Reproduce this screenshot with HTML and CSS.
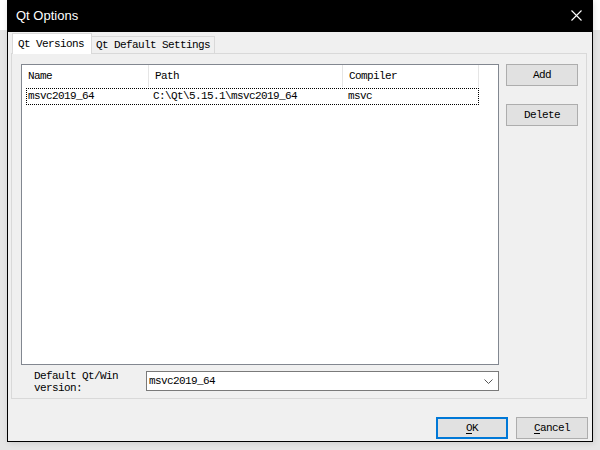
FILE: index.html
```html
<!DOCTYPE html>
<html>
<head>
<meta charset="utf-8">
<link rel="stylesheet" href="styles.css">
</head>
<body>
<div class="desk">
  <div class="behind"></div>
  <div class="window">
    <div class="titlebar">
      <span class="title">Qt Options</span>
      <svg class="close" width="11" height="11" viewBox="0 0 11 11"><path d="M0.5 0.5 L10.5 10.5 M10.5 0.5 L0.5 10.5" stroke="#fff" stroke-width="1.1" fill="none"/></svg>
    </div>
    <div class="client">
      <div class="tabs">
        <div class="tab active">Qt Versions</div>
        <div class="tab">Qt Default Settings</div>
      </div>
      <div class="panel">
        <div class="main-row">
          <div class="list">
            <div class="list-header">
              <div class="col c1">Name</div>
              <div class="col c2">Path</div>
              <div class="col c3">Compiler</div>
              <div class="col c4"></div>
            </div>
            <div class="list-row">
              <div class="cell c1">msvc2019_64</div>
              <div class="cell c2">C:\Qt\5.15.1\msvc2019_64</div>
              <div class="cell c3">msvc</div>
            </div>
          </div>
          <div class="side">
            <button class="btn">Add</button>
            <button class="btn">Delete</button>
          </div>
        </div>
        <div class="default-row">
          <div class="label">Default Qt/Win<br>version:</div>
          <div class="combo">
            <span>msvc2019_64</span>
            <svg class="chev" width="9" height="5" viewBox="0 0 9 5"><path d="M0.5 0.5 L4.5 4.5 L8.5 0.5" stroke="#555" stroke-width="1" fill="none"/></svg>
          </div>
        </div>
      </div>
      <div class="footer">
        <button class="btn default"><u>O</u>K</button>
        <button class="btn"><u>C</u>ancel</button>
      </div>
    </div>
  </div>
</div>
</body>
</html>
```
FILE: styles.css
```css
html, body {
  margin: 0;
  padding: 0;
}
body {
  width: 600px;
  height: 450px;
  overflow: hidden;
  background: #ebebeb;
  font-family: "Liberation Mono", monospace;
  font-size: 11px;
  letter-spacing: -0.6px;
  color: #000;
}
.desk {
  display: flex;
  height: 450px;
  background: linear-gradient(to bottom, #ffffff 0, #ffffff 30px, #e6e6e6 30px);
}
.behind {
  width: 7px;
}
.window {
  width: 584px;
  height: 441px;
  border: 1px solid #000;
  border-top: none;
  background: #f0f0f0;
  display: flex;
  flex-direction: column;
  box-shadow: 1px 1px 6px rgba(0,0,0,0.12);
}
.titlebar {
  height: 31px;
  margin: 0 -1px;
  background: #000;
  display: flex;
  align-items: center;
  justify-content: space-between;
  padding: 0 11px 1px 9px;
}
.title {
  font-family: "Liberation Sans", sans-serif;
  font-size: 13px;
  letter-spacing: 0;
  color: #fff;
}
.client {
  flex: 1;
  padding: 1px 4px 0 3px;
  display: flex;
  flex-direction: column;
}
.tabs {
  display: flex;
  align-items: flex-end;
  height: 20px;
  padding-left: 1px;
}
.tab {
  height: 17px;
  line-height: 17px;
  padding: 0 0 0 4px;
  border: 1px solid #d9d9d9;
  border-bottom: none;
  border-left: none;
  background: #f0f0f0;
  box-sizing: border-box;
  width: 123px;
  white-space: nowrap;
}
.tab.active {
  height: 21px;
  width: 80px;
  line-height: 20px;
  border-left: 1px solid #d9d9d9;
  background: #fff;
  position: relative;
  top: 1px;
  padding-left: 5px;
}
.panel {
  width: 576px;
  height: 346px;
  box-sizing: border-box;
  border: 1px solid #d9d9d9;
  background: #f0f0f0;
  padding: 10px 0 0 9px;
  display: flex;
  flex-direction: column;
}
.main-row {
  display: flex;
  gap: 7px;
}
.list {
  width: 478px;
  height: 301px;
  box-sizing: border-box;
  border: 1px solid #828790;
  background: #fff;
}
.list-header {
  display: flex;
  height: 22px;
}
.col {
  height: 22px;
  line-height: 23px;
  box-sizing: border-box;
  border-right: 1px solid #e5e5e5;
  padding-left: 6px;
}
.col.c4 { border-right: none; }
.c1 { width: 127px; }
.c2 { width: 194px; }
.c3 { width: 136px; }
.list-row {
  display: flex;
  height: 17px;
  line-height: 17px;
  margin: 1px 0 0 4px;
  width: 453px;
  box-sizing: border-box;
  outline: 1px dotted #000;
  outline-offset: -1px;
  white-space: nowrap;
}
.list-row .c1 { width: 123px; padding-left: 2px; }
.list-row .cell { box-sizing: border-box; }
.list-row .c2 { padding-left: 4px; }
.list-row .c3 { padding-left: 5px; }
.side {
  display: flex;
  flex-direction: column;
  gap: 18px;
}
.btn {
  font-family: "Liberation Mono", monospace;
  font-size: 11px;
  letter-spacing: -0.6px;
  width: 72px;
  height: 22px;
  box-sizing: border-box;
  border: 1px solid #adadad;
  background: #e1e1e1;
  color: #000;
  padding: 0;
  margin: 0;
}
.default-row {
  display: flex;
  margin-top: 5px;
  align-items: flex-start;
}
.label {
  width: 112px;
  padding-left: 13px;
  line-height: 12px;
}
.combo {
  width: 353px;
  height: 20px;
  margin-top: 1px;
  box-sizing: border-box;
  border: 1px solid #7a7a7a;
  background: #fff;
  display: flex;
  align-items: center;
  justify-content: space-between;
  padding: 0 5px 0 2px;
}
.chev { margin-top: 1px; }
.footer {
  display: flex;
  justify-content: flex-end;
  gap: 8px;
  margin-top: 18px;
}
.btn.default {
  border: 2px solid #0078d7;
}
u { text-decoration-thickness: 1px; text-underline-offset: 2px; }
```
